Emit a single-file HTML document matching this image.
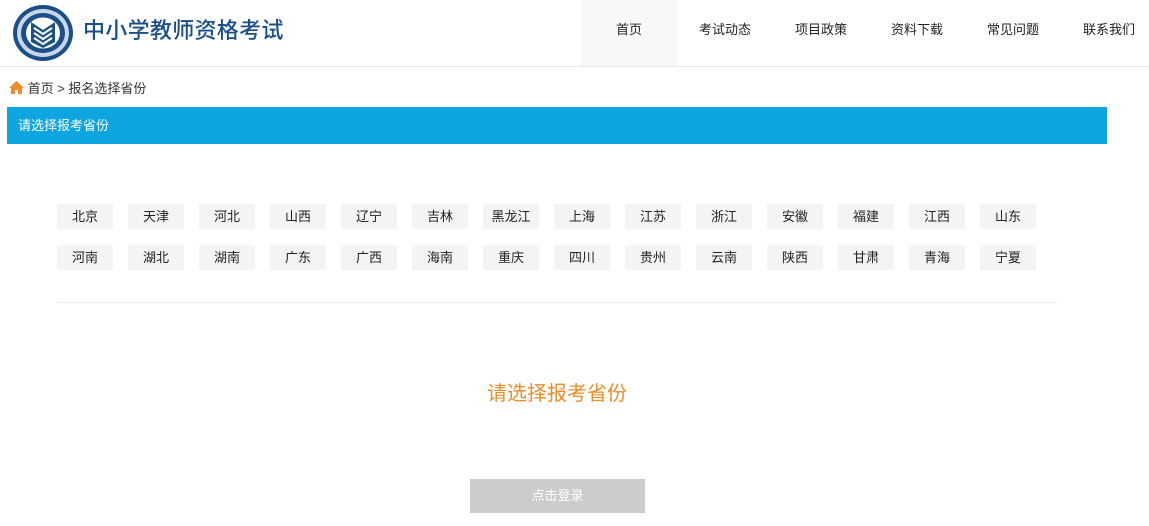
<!DOCTYPE html>
<html><head><meta charset="utf-8"><style>
*{margin:0;padding:0;box-sizing:border-box}
body{width:1149px;height:526px;background:#fff;font-family:"Liberation Sans","Noto Sans CJK SC",sans-serif;position:relative;overflow:hidden;color:#333}
.hdr{position:absolute;left:0;top:0;width:1149px;height:67px;border-bottom:1px solid #e6e6e6}
.title{position:absolute;left:83px;top:13px;font-size:22px;color:#1a4f8a;font-weight:500;letter-spacing:0.3px}
.nav a{position:absolute;top:0;height:66px;width:96px;line-height:60px;text-align:center;font-size:13px;color:#222;text-decoration:none}
.crumb{position:absolute;left:9px;top:78px;font-size:13px;color:#333}
.bar{position:absolute;left:7px;top:107px;width:1100px;height:37px;background:#0fa5e0;color:#fff;font-size:13px;line-height:37px;padding-left:11px}
.p{position:absolute;width:56px;height:25px;background:#f4f4f4;font-size:13px;line-height:25px;text-align:center;color:#222}
.hr{position:absolute;left:57px;top:302px;width:1000px;border-top:1px solid #eaeaea}
.msg{position:absolute;left:0;width:1114px;top:377px;text-align:center;font-size:20px;color:#f08c28}
.btn{position:absolute;left:470px;top:479px;width:175px;height:34px;background:#ccc;color:#fff;font-size:13px;line-height:34px;text-align:center}
</style></head><body>
<div class="hdr">
<svg style="position:absolute;left:12px;top:4px" width="62" height="58" viewBox="0 0 62 58">
<ellipse cx="31" cy="29" rx="30" ry="28" fill="#1a4f8a"/>
<ellipse cx="31" cy="29" rx="26" ry="24" fill="#c9d6e6"/>
<ellipse cx="31" cy="29" rx="22" ry="20" fill="#1a4f8a"/>
<ellipse cx="31" cy="29" rx="17" ry="15.5" fill="#fff"/>
<path d="M19 18 L31 26 L43 18 L43 38 L31 44 L19 38 Z" fill="#1a4f8a"/>
<path d="M22 24 L31 30 L40 24 M22 29 L31 35 L40 29 M22 34 L31 40 L40 34" stroke="#fff" stroke-width="2" fill="none"/>
</svg>
<div class="title">中小学教师资格考试</div>
<div class="nav">
<a style="left:581px;background:#f8f8f8">首页</a>
<a style="left:677px">考试动态</a>
<a style="left:773px">项目政策</a>
<a style="left:869px">资料下载</a>
<a style="left:965px">常见问题</a>
<a style="left:1061px">联系我们</a>
</div>
</div>
<div class="crumb"><svg width="15" height="13" viewBox="0 0 15 13" style="vertical-align:-1px"><path d="M7.5 0 L15 7 L13 7 L13 13 L9 13 L9 9 L6 9 L6 13 L2 13 L2 7 L0 7 Z" fill="#f08c28"/></svg> 首页 &gt; 报名选择省份</div>
<div class="bar">请选择报考省份</div>
<div class="p" style="left:57px;top:204px">北京</div><div class="p" style="left:128px;top:204px">天津</div><div class="p" style="left:199px;top:204px">河北</div><div class="p" style="left:270px;top:204px">山西</div><div class="p" style="left:341px;top:204px">辽宁</div><div class="p" style="left:412px;top:204px">吉林</div><div class="p" style="left:483px;top:204px">黑龙江</div><div class="p" style="left:554px;top:204px">上海</div><div class="p" style="left:625px;top:204px">江苏</div><div class="p" style="left:696px;top:204px">浙江</div><div class="p" style="left:767px;top:204px">安徽</div><div class="p" style="left:838px;top:204px">福建</div><div class="p" style="left:909px;top:204px">江西</div><div class="p" style="left:980px;top:204px">山东</div>
<div class="p" style="left:57px;top:245px">河南</div><div class="p" style="left:128px;top:245px">湖北</div><div class="p" style="left:199px;top:245px">湖南</div><div class="p" style="left:270px;top:245px">广东</div><div class="p" style="left:341px;top:245px">广西</div><div class="p" style="left:412px;top:245px">海南</div><div class="p" style="left:483px;top:245px">重庆</div><div class="p" style="left:554px;top:245px">四川</div><div class="p" style="left:625px;top:245px">贵州</div><div class="p" style="left:696px;top:245px">云南</div><div class="p" style="left:767px;top:245px">陕西</div><div class="p" style="left:838px;top:245px">甘肃</div><div class="p" style="left:909px;top:245px">青海</div><div class="p" style="left:980px;top:245px">宁夏</div>
<div class="hr"></div>
<div class="msg">请选择报考省份</div>
<div class="btn">点击登录</div>
</body></html>
